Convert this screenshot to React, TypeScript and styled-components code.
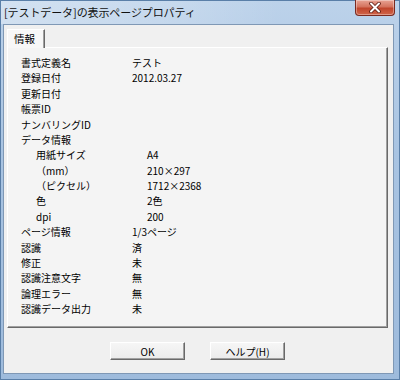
import React from "react";
import styled, { createGlobalStyle } from "styled-components";

const Global = createGlobalStyle`
  html, body { margin: 0; padding: 0; background: #ffffff; }
  * { box-sizing: border-box; }
`;

const jp = `"Noto Sans CJK JP", "Noto Sans", "Liberation Sans", sans-serif`;

const Frame = styled.div`
  width: 400px;
  height: 380px;
  display: flex;
  flex-direction: column;
  background: linear-gradient(180deg, #bcd2ea 0%, #a9c4e2 40%, #9ebbdc 100%);
  border: 1px solid #5a7fa8;
  font-family: ${jp};
  color: #000;
`;

const TitleBar = styled.div`
  height: 23px;
  display: flex;
  align-items: flex-start;
  padding-left: 3px;
  padding-right: 4px;
  background: linear-gradient(90deg, rgba(255,255,255,0.35) 0%, rgba(255,255,255,0.15) 45%, rgba(255,255,255,0) 70%);
`;

const Title = styled.div`
  font-size: 11px;
  line-height: 23px;
  color: #111;
  letter-spacing: -0.1px;
`;

const CloseButton = styled.div`
  margin-left: auto;
  width: 40px;
  height: 16px;
  margin-top: -1px;
  display: flex;
  align-items: center;
  justify-content: center;
  border: 1px solid #7a2a20;
  border-top: none;
  border-radius: 0 0 4px 4px;
  background: linear-gradient(180deg, #e8a394 0%, #d4735e 45%, #c0452c 55%, #d0654a 100%);
  box-shadow: inset 0 0 0 1px rgba(255,255,255,0.35);
`;

const Client = styled.div`
  flex: 1;
  margin: 0 5px 5px 2px;
  background: #f0f0f0;
  border: 1px solid #7f98b5;
  display: flex;
  flex-direction: column;
  padding: 4px 5px 0 3px;
`;

const TabStrip = styled.div`
  display: flex;
  height: 18px;
`;

const Tab = styled.div`
  width: 38px;
  height: 19px;
  padding-left: 6px;
  font-size: 10.5px;
  line-height: 18px;
  background: #f7f7f7;
  border-top: 1px solid #ffffff;
  border-left: 1px solid #ffffff;
  border-right: 1px solid #696969;
  box-shadow: inset -1px 0 #a0a0a0;
  position: relative;
  z-index: 1;
`;

const Panel = styled.div`
  height: 281px;
  background: #f4f4f4;
  border-top: 1px solid #ffffff;
  border-left: 1px solid #ffffff;
  border-right: 1px solid #696969;
  border-bottom: 1px solid #696969;
  box-shadow: inset -1px -1px #a0a0a0;
  padding: 7px 0 0 13px;
`;

const Row = styled.div<{ $indent?: boolean }>`
  display: grid;
  grid-template-columns: 111px 1fr;
  height: 15.375px;
  line-height: 15.375px;
  font-size: 10px;
  padding-left: ${(p) => (p.$indent ? "15px" : "0")};
  white-space: nowrap;
`;

const Label = styled.span``;
const Value = styled.span``;

const ButtonRow = styled.div`
  display: flex;
  justify-content: center;
  gap: 25px;
  margin-top: 14px;
`;

const Button = styled.div`
  width: 75px;
  height: 18px;
  display: flex;
  align-items: center;
  justify-content: center;
  font-size: 10px;
  background: linear-gradient(180deg, #f6f6f6 0%, #ebebeb 100%);
  border: 1px solid;
  border-color: #ffffff #696969 #696969 #ffffff;
  box-shadow: inset -1px -1px #a0a0a0;
`;

type Item = { label: string; value?: string; indent?: boolean };

const rows: Item[] = [
  { label: "書式定義名", value: "テスト" },
  { label: "登録日付", value: "2012.03.27" },
  { label: "更新日付" },
  { label: "帳票ID" },
  { label: "ナンバリングID" },
  { label: "データ情報" },
  { label: "用紙サイズ", value: "A4", indent: true },
  { label: "（mm）", value: "210×297", indent: true },
  { label: "（ピクセル）", value: "1712×2368", indent: true },
  { label: "色", value: "2色", indent: true },
  { label: "dpi", value: "200", indent: true },
  { label: "ページ情報", value: "1/3ページ" },
  { label: "認識", value: "済" },
  { label: "修正", value: "未" },
  { label: "認識注意文字", value: "無" },
  { label: "論理エラー", value: "無" },
  { label: "認識データ出力", value: "未" },
];

export default function App() {
  return (
    <>
      <Global />
      <Frame>
        <TitleBar>
          <Title>[テストデータ]の表示ページプロパティ</Title>
          <CloseButton>
            <svg width="12" height="11" viewBox="0 0 12 11">
              <path d="M2 1.5 L10 9.5 M10 1.5 L2 9.5" stroke="#5a1a10" strokeWidth="3.6" strokeLinecap="round" />
              <path d="M2 1.5 L10 9.5 M10 1.5 L2 9.5" stroke="#ffffff" strokeWidth="2" strokeLinecap="round" />
            </svg>
          </CloseButton>
        </TitleBar>
        <Client>
          <TabStrip>
            <Tab>情報</Tab>
          </TabStrip>
          <Panel>
            {rows.map((r, i) => (
              <Row key={i} $indent={r.indent}>
                <Label>{r.label}</Label>
                <Value>{r.value ?? ""}</Value>
              </Row>
            ))}
          </Panel>
          <ButtonRow>
            <Button>OK</Button>
            <Button>ヘルプ(H)</Button>
          </ButtonRow>
        </Client>
      </Frame>
    </>
  );
}
